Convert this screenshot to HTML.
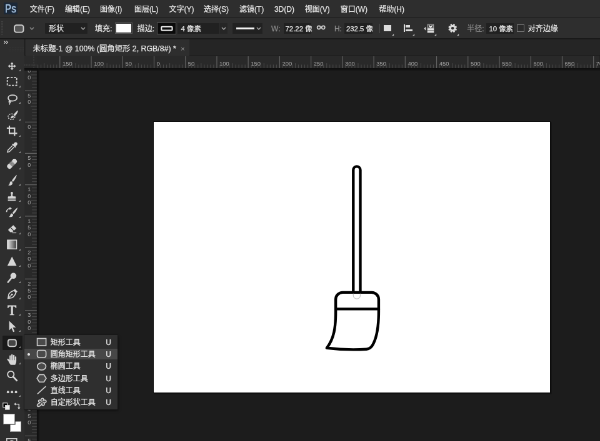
<!DOCTYPE html>
<html lang="zh"><head><meta charset="utf-8"><title>Photoshop</title><style>
html,body{margin:0;padding:0;background:#1c1c1c;}
body{width:600px;height:441px;overflow:hidden;position:relative}
#app{position:absolute;left:0;top:0;width:960px;height:706px;transform:scale(.625);transform-origin:0 0;font-family:"Liberation Sans","Noto Sans CJK SC",sans-serif;font-size:12px;color:#e6e6e6;overflow:hidden;will-change:transform;filter:blur(0.5px)}
.t{position:absolute;white-space:nowrap;line-height:16px;height:16px;margin-top:-8px}
.t{-webkit-text-stroke:0.25px currentColor}
.dim{color:#8c8c8c}
.ps{position:absolute;font-size:19px;line-height:24px;color:#a9c6e4;transform:scaleX(.8);transform-origin:0 0;-webkit-text-stroke:0.5px #a9c6e4}
svg.abs{position:absolute;overflow:visible}
</style></head><body>
<div id="app">
<div style="position:absolute;left:0px;top:0px;width:960px;height:705.6px;background:#1c1c1c"></div>
<div style="position:absolute;left:0px;top:0px;width:960px;height:28.16px;background:#2e2e2e"></div>
<div style="position:absolute;left:5.76px;top:4.16px;width:22.08px;height:19.2px;background:#1b2838"></div>
<div class="ps" style="left:8.32px;top:1.6px">Ps</div>
<div class="t " style="left:47.68px;top:14.88px;">文件(F)</div>
<div class="t " style="left:104px;top:14.88px;">编辑(E)</div>
<div class="t " style="left:160px;top:14.88px;">图像(I)</div>
<div class="t " style="left:214.88px;top:14.88px;">图层(L)</div>
<div class="t " style="left:270.4px;top:14.88px;">文字(Y)</div>
<div class="t " style="left:325.92px;top:14.88px;">选择(S)</div>
<div class="t " style="left:382.88px;top:14.88px;">滤镜(T)</div>
<div class="t " style="left:438.88px;top:14.88px;">3D(D)</div>
<div class="t " style="left:487.68px;top:14.88px;">视图(V)</div>
<div class="t " style="left:544.8px;top:14.88px;">窗口(W)</div>
<div class="t " style="left:606.24px;top:14.88px;">帮助(H)</div>
<div style="position:absolute;left:0px;top:28.16px;width:960px;height:1.28px;background:#1a1a1a"></div>
<div style="position:absolute;left:0px;top:29.44px;width:960px;height:32px;background:#2e2e2e"></div>
<svg class="abs" style="left:22.08px;top:38.88px;" width="16.64" height="13.76" viewBox="0 0 10.4 8.6"><rect x="0.7" y="0.7" width="9" height="7.2" rx="2" fill="#555" stroke="#d2d2d2" stroke-width="1.2"/></svg>
<svg class="abs" style="left:1.6px;top:34.4px;" width="3.2" height="22.4" viewBox="0 0 2 14"><path d="M0.5 0V14M1.6 0V14" stroke="#555" stroke-width="0.5" stroke-dasharray="0.7 0.9"/></svg>
<svg class="abs" style="left:46.72px;top:43.2px;" width="8" height="5.12" viewBox="0 0 5 3.2"><path d="M0.6 0.6L2.5 2.5L4.4 0.6" fill="none" stroke="#8c8c8c" stroke-width="0.9"/></svg>
<div style="position:absolute;left:72px;top:36.64px;width:68px;height:17.6px;background:#212121;border-radius:1px"></div>
<div class="t " style="left:77.92px;top:45.76px;">形状</div>
<svg class="abs" style="left:129.28px;top:43.2px;" width="8" height="5.12" viewBox="0 0 5 3.2"><path d="M0.6 0.6L2.5 2.5L4.4 0.6" fill="none" stroke="#aaa" stroke-width="0.9"/></svg>
<div class="t " style="left:152px;top:45.76px;">填充:</div>
<div style="position:absolute;left:184px;top:36.16px;width:28.16px;height:18.24px;box-sizing:border-box;border:1px solid #5a5a5a"></div>
<div style="position:absolute;left:185.92px;top:38.08px;width:24.32px;height:14.4px;background:#fff"></div>
<div class="t " style="left:219.68px;top:45.76px;">描边:</div>
<div style="position:absolute;left:251.2px;top:35.52px;width:30.72px;height:19.52px;background:#0a0a0a;box-sizing:border-box;border:1px solid #5a5a5a"></div>
<svg class="abs" style="left:256.8px;top:40.96px;" width="20" height="9.6" viewBox="0 0 12.5 6"><rect x="0.8" y="1.1" width="10.8" height="3.6" rx="0.8" fill="none" stroke="#f0f0f0" stroke-width="1.3"/></svg>
<div style="position:absolute;left:284px;top:36.64px;width:67.2px;height:17.6px;background:#212121"></div>
<div class="t " style="left:289.6px;top:45.76px;font-size:11.4px">4 像素</div>
<div style="position:absolute;left:352.48px;top:36.64px;width:12px;height:17.6px;background:#262626"></div>
<svg class="abs" style="left:354.4px;top:43.2px;" width="8" height="5.12" viewBox="0 0 5 3.2"><path d="M0.6 0.6L2.5 2.5L4.4 0.6" fill="none" stroke="#aaa" stroke-width="0.9"/></svg>
<div style="position:absolute;left:371.68px;top:36.64px;width:48.64px;height:17.6px;background:#212121"></div>
<div style="position:absolute;left:377.6px;top:44.48px;width:29.6px;height:2.08px;background:#f2f2f2"></div>
<svg class="abs" style="left:409.76px;top:43.2px;" width="8" height="5.12" viewBox="0 0 5 3.2"><path d="M0.6 0.6L2.5 2.5L4.4 0.6" fill="none" stroke="#aaa" stroke-width="0.9"/></svg>
<div class="t dim" style="left:434.08px;top:45.76px;">W:</div>
<div style="position:absolute;left:453.6px;top:36.64px;width:44.8px;height:17.6px;background:#212121"></div>
<div class="t " style="left:456.48px;top:45.76px;font-size:11.4px">72.22 像</div>
<svg class="abs" style="left:505.6px;top:40.32px;" width="16" height="8" viewBox="0 0 10 5"><circle cx="2.6" cy="2.5" r="1.6" fill="none" stroke="#d2d2d2" stroke-width="1.1"/><circle cx="7" cy="2.5" r="1.6" fill="none" stroke="#d2d2d2" stroke-width="1.1"/></svg>
<div class="t dim" style="left:534.88px;top:45.76px;">H:</div>
<div style="position:absolute;left:551.2px;top:36.64px;width:44.8px;height:17.6px;background:#212121"></div>
<div class="t " style="left:553.92px;top:45.76px;font-size:11.4px">232.5 像</div>
<div style="position:absolute;left:606.72px;top:37.76px;width:1.12px;height:15.36px;background:#4a4a4a"></div>
<div style="position:absolute;left:614.08px;top:40px;width:12px;height:10.4px;background:#dcdcdc"></div>
<svg class="abs" style="left:626.88px;top:54.4px;" width="3.2" height="3.2" viewBox="0 0 2 2"><path d="M2 0V2H0z" fill="#bbb"/></svg>
<div style="position:absolute;left:646.4px;top:38.72px;width:1.76px;height:12.16px;background:#dcdcdc"></div>
<div style="position:absolute;left:648.96px;top:40.48px;width:6.72px;height:3.2px;background:#dcdcdc"></div>
<div style="position:absolute;left:648.96px;top:46.72px;width:11.52px;height:3.2px;background:#dcdcdc"></div>
<svg class="abs" style="left:660.16px;top:54.4px;" width="3.2" height="3.2" viewBox="0 0 2 2"><path d="M2 0V2H0z" fill="#bbb"/></svg>
<svg class="abs" style="left:678.08px;top:37.76px;" width="17.6" height="15.04" viewBox="0 0 11 9.4"><path d="M3.9 0.7h5.9v3.4H3.9z" fill="#3a3a3a" stroke="#9a9a9a" stroke-width="0.8"/><path d="M5 1.6L6.85 3.5L8.7 1.6" fill="none" stroke="#f0f0f0" stroke-width="1.1"/><path d="M3.6 4.5h6.6v4.5H3.6z" fill="#e2e2e2"/><path d="M3.6 6.9h6.6" stroke="#444" stroke-width="0.6"/><path d="M2 3L0.3 4.9L2 6.8z" fill="#dcdcdc"/></svg>
<svg class="abs" style="left:695.2px;top:54.4px;" width="3.2" height="3.2" viewBox="0 0 2 2"><path d="M2 0V2H0z" fill="#bbb"/></svg>
<svg class="abs" style="left:717.44px;top:37.6px;" width="14.4" height="14.4" viewBox="0 0 9 9"><path d="M7.69 4.80 L8.81 5.39 L8.17 6.92 L6.96 6.54 L6.54 6.96 L6.92 8.17 L5.39 8.81 L4.80 7.69 L4.20 7.69 L3.61 8.81 L2.08 8.17 L2.46 6.96 L2.04 6.54 L0.83 6.92 L0.19 5.39 L1.31 4.80 L1.31 4.20 L0.19 3.61 L0.83 2.08 L2.04 2.46 L2.46 2.04 L2.08 0.83 L3.61 0.19 L4.20 1.31 L4.80 1.31 L5.39 0.19 L6.92 0.83 L6.54 2.04 L6.96 2.46 L8.17 2.08 L8.81 3.61 L7.69 4.20 Z M4.5 3.05a1.45 1.45 0 1 0 0.001 0z" fill="#dcdcdc" fill-rule="evenodd"/></svg>
<svg class="abs" style="left:731.2px;top:54.4px;" width="3.2" height="3.2" viewBox="0 0 2 2"><path d="M2 0V2H0z" fill="#bbb"/></svg>
<div class="t dim" style="left:747.2px;top:45.76px;">半径:</div>
<div style="position:absolute;left:778.4px;top:36.64px;width:43.2px;height:17.6px;background:#212121"></div>
<div class="t " style="left:782.4px;top:45.76px;font-size:11.4px">10 像素</div>
<div style="position:absolute;left:827.2px;top:39.36px;width:11.84px;height:11.84px;box-sizing:border-box;border:1px solid #777;background:#2a2a2a"></div>
<div class="t " style="left:844.8px;top:45.76px;">对齐边缘</div>
<div style="position:absolute;left:0px;top:61.12px;width:960px;height:27.2px;background:#252525"></div>
<div style="position:absolute;left:0px;top:61.12px;width:39.36px;height:27.2px;background:#2e2e2e"></div>
<div style="position:absolute;left:40.64px;top:62.4px;width:262.08px;height:26.56px;background:#2e2e2e"></div>
<div style="position:absolute;left:0px;top:61.12px;width:960px;height:1.44px;background:#191919"></div>
<div style="position:absolute;left:39.2px;top:62.4px;width:1.28px;height:644.8px;background:#1b1b1b"></div>
<svg class="abs" style="left:13.6px;top:75.2px;" width="24" height="8" viewBox="0 0 15 5"><path d="M0 1H15M0 2.6H15M0 4.2H15" stroke="#3a3a3a" stroke-width="0.6" stroke-dasharray="0.8 0.8"/></svg>
<div class="t " style="left:52.48px;top:78.4px;font-size:12.35px">未标题-1 @ 100% (圆角矩形 2, RGB/8#) *</div>
<div class="t " style="left:288.96px;top:78.08px;color:#9a9a9a;font-size:11.5px;-webkit-text-stroke:0">×</div>
<div style="position:absolute;left:0px;top:88px;width:39.36px;height:624px;background:#2e2e2e"></div>
<svg class="abs" style="left:5.6px;top:65.28px;" width="8" height="5.44" viewBox="0 0 5 3.4"><path d="M0.4 0.4L1.8 1.7L0.4 3M2.6 0.4L4 1.7L2.6 3" fill="none" stroke="#d6d6d6" stroke-width="0.7"/></svg>
<div style="position:absolute;left:4.16px;top:536.96px;width:31.36px;height:23.04px;background:#1a1a1a;border-radius:1.2px"></div>
<svg class="abs" style="left:7.52px;top:94.72px;" width="22.4" height="22.4" viewBox="0 0 14 14"><path transform="translate(1.1 0.9) scale(.84)" d="M7 2.2L8.9 4.5H7.6V6.4H9.5V5.1L11.8 7L9.5 8.9V7.6H7.6V9.5H8.9L7 11.8L5.1 9.5H6.4V7.6H4.5V8.9L2.2 7L4.5 5.1V6.4H6.4V4.5H5.1z" fill="#d6d6d6"/></svg>
<svg class="abs" style="left:30.24px;top:111.36px;" width="2.88" height="2.88" viewBox="0 0 1.8 1.8"><path d="M1.8 0V1.8H0z" fill="#9a9a9a"/></svg>
<svg class="abs" style="left:7.52px;top:119.01px;" width="22.4" height="22.4" viewBox="0 0 14 14"><rect x="2.3" y="3" width="9.4" height="8" fill="none" stroke="#d6d6d6" stroke-width="1.1" stroke-dasharray="2.1 1.25"/></svg>
<svg class="abs" style="left:30.24px;top:137.41px;" width="2.88" height="2.88" viewBox="0 0 1.8 1.8"><path d="M1.8 0V1.8H0z" fill="#9a9a9a"/></svg>
<svg class="abs" style="left:7.52px;top:146.82px;" width="22.4" height="22.4" viewBox="0 0 14 14"><path d="M7.6 3.2C10.2 3.2 12 4.4 12 6.1C12 7.9 9.9 9.1 7.4 9.1C6.6 9.1 5.9 9 5.3 8.8C4.3 8.4 3.2 7.4 3.2 6.1C3.2 4.4 5 3.2 7.6 3.2z" fill="none" stroke="#d6d6d6" stroke-width="1.1"/><path d="M5 8.6C4 9 3.6 9.9 4.2 10.6C4.8 11.2 5.6 10.9 5.5 10.1C5.4 9.4 4.6 9.3 4.2 9.9 M4.6 10.8C5 11.6 4.9 12.2 4.4 12.8" fill="none" stroke="#d6d6d6" stroke-width="0.9"/></svg>
<svg class="abs" style="left:30.24px;top:163.46px;" width="2.88" height="2.88" viewBox="0 0 1.8 1.8"><path d="M1.8 0V1.8H0z" fill="#9a9a9a"/></svg>
<svg class="abs" style="left:7.52px;top:172.86px;" width="22.4" height="22.4" viewBox="0 0 14 14"><g transform="translate(0.9 0)"><ellipse cx="5.6" cy="8.6" rx="3.4" ry="2.9" fill="none" stroke="#d6d6d6" stroke-width="0.9" stroke-dasharray="1.4 1"/><path d="M12.2 2.2C10.6 3 8.6 5.2 7.6 6.8L8.8 8C10.4 7 12 4.4 12.2 2.2z M7 7.4C5.8 7.6 5.2 8.6 4.6 10.2C6 10.2 7.6 9.8 8.2 8.6z" fill="#d6d6d6"/></g></svg>
<svg class="abs" style="left:30.24px;top:189.5px;" width="2.88" height="2.88" viewBox="0 0 1.8 1.8"><path d="M1.8 0V1.8H0z" fill="#9a9a9a"/></svg>
<svg class="abs" style="left:7.52px;top:197.95px;" width="22.4" height="22.4" viewBox="0 0 14 14"><path d="M4.4 1.8V9.6H12.2 M1.8 4.4H9.6V12.2" fill="none" stroke="#d6d6d6" stroke-width="1.3"/></svg>
<svg class="abs" style="left:30.24px;top:215.55px;" width="2.88" height="2.88" viewBox="0 0 1.8 1.8"><path d="M1.8 0V1.8H0z" fill="#9a9a9a"/></svg>
<svg class="abs" style="left:7.52px;top:224.96px;" width="22.4" height="22.4" viewBox="0 0 14 14"><path d="M11.9 2.1C11.1 1.3 9.9 1.5 9.3 2.3L8.3 3.5L7.7 2.9L6.9 3.7L10.3 7.1L11.1 6.3L10.5 5.7L11.7 4.7C12.5 4.1 12.7 2.9 11.9 2.1z" fill="#d6d6d6"/><path d="M7.6 4.9L3 9.5L2.4 11.6L4.5 11L9.1 6.4" fill="none" stroke="#d6d6d6" stroke-width="0.9"/></svg>
<svg class="abs" style="left:30.24px;top:241.6px;" width="2.88" height="2.88" viewBox="0 0 1.8 1.8"><path d="M1.8 0V1.8H0z" fill="#9a9a9a"/></svg>
<svg class="abs" style="left:7.52px;top:251.01px;" width="22.4" height="22.4" viewBox="0 0 14 14"><g transform="rotate(-45 7 7)"><rect x="1.2" y="4.6" width="11.6" height="4.8" rx="2.2" fill="#d6d6d6"/><rect x="5.2" y="4.6" width="3.6" height="4.8" fill="#2c2c2c" opacity=".55"/><circle cx="6.2" cy="6.2" r=".45" fill="#d6d6d6"/><circle cx="7.8" cy="6.2" r=".45" fill="#d6d6d6"/><circle cx="6.2" cy="7.8" r=".45" fill="#d6d6d6"/><circle cx="7.8" cy="7.8" r=".45" fill="#d6d6d6"/></g></svg>
<svg class="abs" style="left:30.24px;top:267.65px;" width="2.88" height="2.88" viewBox="0 0 1.8 1.8"><path d="M1.8 0V1.8H0z" fill="#9a9a9a"/></svg>
<svg class="abs" style="left:7.52px;top:277.06px;" width="22.4" height="22.4" viewBox="0 0 14 14"><path transform="translate(1.2 0) scale(.86 1)" d="M12.3 1.7C10.6 2.7 7.6 6 6.6 7.6L7.8 8.8C9.4 7.6 12 4 12.3 1.7z M6 8.2C4.6 8.3 4.2 9.3 4 10.3C3.8 11.1 3.2 11.7 2.4 12C3.8 12.6 6 12.4 6.9 11.2C7.5 10.4 7.4 9.6 7.1 9.2z" fill="#d6d6d6"/></svg>
<svg class="abs" style="left:30.24px;top:293.7px;" width="2.88" height="2.88" viewBox="0 0 1.8 1.8"><path d="M1.8 0V1.8H0z" fill="#9a9a9a"/></svg>
<svg class="abs" style="left:7.52px;top:303.1px;" width="22.4" height="22.4" viewBox="0 0 14 14"><path transform="translate(1.1 1.4) scale(.82)" d="M5.6 2.6C5.6 1.8 6.2 1.3 7 1.3C7.8 1.3 8.4 1.8 8.4 2.6C8.4 3.6 7.8 4.4 7.8 5.4C7.8 6.2 8.2 6.6 9 6.8H10.8C11.4 6.8 11.8 7.2 11.8 7.8V9.6H2.2V7.8C2.2 7.2 2.6 6.8 3.2 6.8H5C5.8 6.6 6.2 6.2 6.2 5.4C6.2 4.4 5.6 3.6 5.6 2.6z M2.2 10.6H11.8V12.2H2.2z" fill="#d6d6d6"/></svg>
<svg class="abs" style="left:30.24px;top:319.74px;" width="2.88" height="2.88" viewBox="0 0 1.8 1.8"><path d="M1.8 0V1.8H0z" fill="#9a9a9a"/></svg>
<svg class="abs" style="left:7.52px;top:329.15px;" width="22.4" height="22.4" viewBox="0 0 14 14"><path d="M12.6 1.9C11 2.9 8.4 5.8 7.5 7.3L8.6 8.4C10.1 7.3 12.3 4 12.6 1.9z M7 7.8C5.8 7.9 5.4 8.8 5.2 9.7C5 10.4 4.6 10.9 3.9 11.2C5.1 11.7 7 11.5 7.8 10.5C8.3 9.8 8.2 9.1 7.9 8.7z" fill="#d6d6d6"/><path d="M1.6 6.4C1.6 4.2 3.2 2.8 5.2 2.8" fill="none" stroke="#d6d6d6" stroke-width="1"/><path d="M4.6 1.2L6.8 2.8L4.6 4.4z" fill="#d6d6d6"/></svg>
<svg class="abs" style="left:30.24px;top:345.79px;" width="2.88" height="2.88" viewBox="0 0 1.8 1.8"><path d="M1.8 0V1.8H0z" fill="#9a9a9a"/></svg>
<svg class="abs" style="left:7.52px;top:355.2px;" width="22.4" height="22.4" viewBox="0 0 14 14"><g transform="translate(1.6 1.7) scale(.8)"><path d="M8.4 2L12.2 5.8L7.2 10.8H4.6L2.4 8.6C2 8.2 2 7.6 2.4 7.2z" fill="#d6d6d6"/><path d="M5.2 5.2L9 9" stroke="#2c2c2c" stroke-width="0.9"/><path d="M7 11.6H12.2" fill="none" stroke="#d6d6d6" stroke-width="0.9"/></g></svg>
<svg class="abs" style="left:30.24px;top:371.84px;" width="2.88" height="2.88" viewBox="0 0 1.8 1.8"><path d="M1.8 0V1.8H0z" fill="#9a9a9a"/></svg>
<svg class="abs" style="left:7.52px;top:380.45px;" width="22.4" height="22.4" viewBox="0 0 14 14"><defs><linearGradient id="gr" x1="0" x2="1"><stop offset="0" stop-color="#e8e8e8"/><stop offset="1" stop-color="#3a3a3a"/></linearGradient></defs><rect x="2.4" y="2.6" width="9.2" height="8.8" fill="url(#gr)" stroke="#d6d6d6" stroke-width="0.9"/></svg>
<svg class="abs" style="left:30.24px;top:397.89px;" width="2.88" height="2.88" viewBox="0 0 1.8 1.8"><path d="M1.8 0V1.8H0z" fill="#9a9a9a"/></svg>
<svg class="abs" style="left:7.52px;top:407.3px;" width="22.4" height="22.4" viewBox="0 0 14 14"><path d="M7 2.2L11.6 11.4H2.4z" fill="#d6d6d6"/></svg>
<svg class="abs" style="left:30.24px;top:423.94px;" width="2.88" height="2.88" viewBox="0 0 1.8 1.8"><path d="M1.8 0V1.8H0z" fill="#9a9a9a"/></svg>
<svg class="abs" style="left:7.52px;top:433.34px;" width="22.4" height="22.4" viewBox="0 0 14 14"><circle cx="8.4" cy="5.2" r="3" fill="#d6d6d6"/><path d="M6.4 7.4L3 11.6" fill="none" stroke="#d6d6d6" stroke-width="1.6" stroke-linecap="round"/></svg>
<svg class="abs" style="left:30.24px;top:449.98px;" width="2.88" height="2.88" viewBox="0 0 1.8 1.8"><path d="M1.8 0V1.8H0z" fill="#9a9a9a"/></svg>
<svg class="abs" style="left:7.52px;top:459.39px;" width="22.4" height="22.4" viewBox="0 0 14 14"><path d="M3 11.6L3.8 7.2C5.2 5.4 7 4.2 9 3.6L11 5.6C10.4 7.6 9.2 9.4 7.4 10.8z" fill="none" stroke="#d6d6d6" stroke-width="1"/><path d="M3.2 11.4L6.6 8" fill="none" stroke="#d6d6d6" stroke-width="0.8"/><circle cx="7" cy="7.6" r="0.9" fill="#d6d6d6"/><path d="M9.4 2.6L12 5.2" fill="none" stroke="#d6d6d6" stroke-width="1.4"/></svg>
<svg class="abs" style="left:30.24px;top:476.03px;" width="2.88" height="2.88" viewBox="0 0 1.8 1.8"><path d="M1.8 0V1.8H0z" fill="#9a9a9a"/></svg>
<svg class="abs" style="left:7.52px;top:485.44px;" width="22.4" height="22.4" viewBox="0 0 14 14"><path d="M2.6 2.2H11.4V5H10.6C10.5 4 10.1 3.4 9.2 3.4H8V10.4C8 11 8.3 11.2 9.2 11.2V12H4.8V11.2C5.7 11.2 6 11 6 10.4V3.4H4.8C3.9 3.4 3.5 4 3.4 5H2.6z" fill="#d6d6d6"/></svg>
<svg class="abs" style="left:30.24px;top:502.08px;" width="2.88" height="2.88" viewBox="0 0 1.8 1.8"><path d="M1.8 0V1.8H0z" fill="#9a9a9a"/></svg>
<svg class="abs" style="left:7.52px;top:511.49px;" width="22.4" height="22.4" viewBox="0 0 14 14"><path d="M4.2 1.6L11 8.2H7.8L9.6 12L8.2 12.6L6.5 8.8L4.2 11z" fill="#d6d6d6"/></svg>
<svg class="abs" style="left:30.24px;top:528.13px;" width="2.88" height="2.88" viewBox="0 0 1.8 1.8"><path d="M1.8 0V1.8H0z" fill="#9a9a9a"/></svg>
<svg class="abs" style="left:7.52px;top:537.54px;" width="22.4" height="22.4" viewBox="0 0 14 14"><rect x="3" y="3.4" width="8.2" height="6.8" rx="2" fill="#454545" stroke="#d6d6d6" stroke-width="1.1"/></svg>
<svg class="abs" style="left:30.24px;top:554.18px;" width="2.88" height="2.88" viewBox="0 0 1.8 1.8"><path d="M1.8 0V1.8H0z" fill="#9a9a9a"/></svg>
<svg class="abs" style="left:7.52px;top:563.58px;" width="22.4" height="22.4" viewBox="0 0 14 14"><g stroke="#d6d6d6" stroke-width="1.45" stroke-linecap="round" fill="none"><path d="M5.2 3.6V8M7 2.5V8M8.8 3V8M10.6 4.6V8.6M2.9 6.9L4.9 9.4"/></g><path d="M4.5 7.6H11.3V9C11.3 10.4 10.6 11.2 10.2 12.4H5.6C5.2 11.4 4 10.4 3.6 9z" fill="#d6d6d6"/></svg>
<svg class="abs" style="left:30.24px;top:580.22px;" width="2.88" height="2.88" viewBox="0 0 1.8 1.8"><path d="M1.8 0V1.8H0z" fill="#9a9a9a"/></svg>
<svg class="abs" style="left:7.52px;top:589.63px;" width="22.4" height="22.4" viewBox="0 0 14 14"><circle cx="5.8" cy="5.6" r="3.2" fill="none" stroke="#d6d6d6" stroke-width="1.2"/><path d="M8.2 8L11.8 11.8" fill="none" stroke="#d6d6d6" stroke-width="1.7" stroke-linecap="round"/></svg>
<svg class="abs" style="left:7.52px;top:615.68px;" width="22.4" height="22.4" viewBox="0 0 14 14"><circle cx="3" cy="7" r="1.25" fill="#d6d6d6"/><circle cx="7" cy="7" r="1.25" fill="#d6d6d6"/><circle cx="11" cy="7" r="1.25" fill="#d6d6d6"/></svg>
<svg class="abs" style="left:30.24px;top:632.32px;" width="2.88" height="2.88" viewBox="0 0 1.8 1.8"><path d="M1.8 0V1.8H0z" fill="#9a9a9a"/></svg>
<svg class="abs" style="left:4.16px;top:644px;" width="12.8" height="12.8" viewBox="0 0 8 8"><rect x="0.5" y="0.5" width="4.2" height="4.2" fill="#000" stroke="#ddd" stroke-width="0.7"/><rect x="2.8" y="2.8" width="4.2" height="4.2" fill="#eee" stroke="#ddd" stroke-width="0.5"/></svg>
<svg class="abs" style="left:21.12px;top:643.68px;" width="12.8" height="12.8" viewBox="0 0 8 8"><path d="M2.2 1.6H5.8V5.2" fill="none" stroke="#ddd" stroke-width="0.8"/><path d="M0.8 1.6L2.6 0.2V3z M5.8 6.8L4.4 5H7.2z" fill="#ddd"/></svg>
<div style="position:absolute;left:16.32px;top:673.6px;width:17.28px;height:16.96px;background:#fff;box-sizing:border-box;border:0.6px solid #9a9a9a"></div>
<div style="position:absolute;left:5.12px;top:661.76px;width:18.56px;height:17.6px;background:#fff;box-sizing:border-box;border:0.6px solid #8a8a8a;box-shadow:0 0 0 0.6px #2c2c2c"></div>
<svg class="abs" style="left:10.4px;top:700.8px;" width="17.6" height="9.6" viewBox="0 0 11 6"><rect x="0.5" y="0.5" width="10" height="7" fill="none" stroke="#ccc" stroke-width="1"/><circle cx="5.5" cy="4.5" r="2" fill="none" stroke="#ccc" stroke-width="0.8"/></svg>
<svg class="abs" style="left:39.36px;top:88.96px;font-family:'Liberation Sans',sans-serif;overflow:hidden" width="920.64" height="20.48" viewBox="24.6 0 575.4 12.8"><rect x="0" y="0" width="600" height="12.8" fill="#292929"/><text x="62.57" y="10.2" font-size="5.9" fill="#a4a4a4">150</text><text x="93.98" y="10.2" font-size="5.9" fill="#a4a4a4">100</text><text x="125.39" y="10.2" font-size="5.9" fill="#a4a4a4">50</text><text x="156.80" y="10.2" font-size="5.9" fill="#a4a4a4">0</text><text x="188.21" y="10.2" font-size="5.9" fill="#a4a4a4">50</text><text x="219.62" y="10.2" font-size="5.9" fill="#a4a4a4">100</text><text x="251.03" y="10.2" font-size="5.9" fill="#a4a4a4">150</text><text x="282.44" y="10.2" font-size="5.9" fill="#a4a4a4">200</text><text x="313.85" y="10.2" font-size="5.9" fill="#a4a4a4">250</text><text x="345.26" y="10.2" font-size="5.9" fill="#a4a4a4">300</text><text x="376.67" y="10.2" font-size="5.9" fill="#a4a4a4">350</text><text x="408.08" y="10.2" font-size="5.9" fill="#a4a4a4">400</text><text x="439.49" y="10.2" font-size="5.9" fill="#a4a4a4">450</text><text x="470.90" y="10.2" font-size="5.9" fill="#a4a4a4">500</text><text x="502.31" y="10.2" font-size="5.9" fill="#a4a4a4">550</text><text x="533.72" y="10.2" font-size="5.9" fill="#a4a4a4">600</text><text x="565.13" y="10.2" font-size="5.9" fill="#a4a4a4">650</text><text x="596.54" y="10.2" font-size="5.9" fill="#a4a4a4">700</text><path d="M37.98 9V12.8M41.12 9V12.8M44.26 7.6V12.8M47.41 9V12.8M50.55 9V12.8M53.69 9V12.8M56.83 9V12.8M63.11 9V12.8M66.25 9V12.8M69.39 9V12.8M72.53 9V12.8M75.67 7.6V12.8M78.82 9V12.8M81.96 9V12.8M85.10 9V12.8M88.24 9V12.8M94.52 9V12.8M97.66 9V12.8M100.80 9V12.8M103.94 9V12.8M107.08 7.6V12.8M110.23 9V12.8M113.37 9V12.8M116.51 9V12.8M119.65 9V12.8M125.93 9V12.8M129.07 9V12.8M132.21 9V12.8M135.35 9V12.8M138.50 7.6V12.8M141.64 9V12.8M144.78 9V12.8M147.92 9V12.8M151.06 9V12.8M157.34 9V12.8M160.48 9V12.8M163.62 9V12.8M166.76 9V12.8M169.91 7.6V12.8M173.05 9V12.8M176.19 9V12.8M179.33 9V12.8M182.47 9V12.8M188.75 9V12.8M191.89 9V12.8M195.03 9V12.8M198.17 9V12.8M201.31 7.6V12.8M204.46 9V12.8M207.60 9V12.8M210.74 9V12.8M213.88 9V12.8M220.16 9V12.8M223.30 9V12.8M226.44 9V12.8M229.58 9V12.8M232.72 7.6V12.8M235.87 9V12.8M239.01 9V12.8M242.15 9V12.8M245.29 9V12.8M251.57 9V12.8M254.71 9V12.8M257.85 9V12.8M260.99 9V12.8M264.13 7.6V12.8M267.28 9V12.8M270.42 9V12.8M273.56 9V12.8M276.70 9V12.8M282.98 9V12.8M286.12 9V12.8M289.26 9V12.8M292.40 9V12.8M295.54 7.6V12.8M298.69 9V12.8M301.83 9V12.8M304.97 9V12.8M308.11 9V12.8M314.39 9V12.8M317.53 9V12.8M320.67 9V12.8M323.81 9V12.8M326.95 7.6V12.8M330.10 9V12.8M333.24 9V12.8M336.38 9V12.8M339.52 9V12.8M345.80 9V12.8M348.94 9V12.8M352.08 9V12.8M355.22 9V12.8M358.36 7.6V12.8M361.51 9V12.8M364.65 9V12.8M367.79 9V12.8M370.93 9V12.8M377.21 9V12.8M380.35 9V12.8M383.49 9V12.8M386.63 9V12.8M389.77 7.6V12.8M392.92 9V12.8M396.06 9V12.8M399.20 9V12.8M402.34 9V12.8M408.62 9V12.8M411.76 9V12.8M414.90 9V12.8M418.04 9V12.8M421.19 7.6V12.8M424.33 9V12.8M427.47 9V12.8M430.61 9V12.8M433.75 9V12.8M440.03 9V12.8M443.17 9V12.8M446.31 9V12.8M449.45 9V12.8M452.59 7.6V12.8M455.74 9V12.8M458.88 9V12.8M462.02 9V12.8M465.16 9V12.8M471.44 9V12.8M474.58 9V12.8M477.72 9V12.8M480.86 9V12.8M484.00 7.6V12.8M487.15 9V12.8M490.29 9V12.8M493.43 9V12.8M496.57 9V12.8M502.85 9V12.8M505.99 9V12.8M509.13 9V12.8M512.27 9V12.8M515.41 7.6V12.8M518.56 9V12.8M521.70 9V12.8M524.84 9V12.8M527.98 9V12.8M534.26 9V12.8M537.40 9V12.8M540.54 9V12.8M543.68 9V12.8M546.83 7.6V12.8M549.97 9V12.8M553.11 9V12.8M556.25 9V12.8M559.39 9V12.8M565.67 9V12.8M568.81 9V12.8M571.95 9V12.8M575.09 9V12.8M578.24 7.6V12.8M581.38 9V12.8M584.52 9V12.8M587.66 9V12.8M590.80 9V12.8M597.08 9V12.8" stroke="#4c4c4c" stroke-width="0.6" fill="none"/><path d="M59.97 0.6V12.8M91.38 0.6V12.8M122.79 0.6V12.8M154.20 0.6V12.8M185.61 0.6V12.8M217.02 0.6V12.8M248.43 0.6V12.8M279.84 0.6V12.8M311.25 0.6V12.8M342.66 0.6V12.8M374.07 0.6V12.8M405.48 0.6V12.8M436.89 0.6V12.8M468.30 0.6V12.8M499.71 0.6V12.8M531.12 0.6V12.8M562.53 0.6V12.8M593.94 0.6V12.8" stroke="#646464" stroke-width="0.7" fill="none"/></svg>
<svg class="abs" style="left:39.36px;top:109.44px;font-family:'Liberation Sans',sans-serif;overflow:hidden" width="19.84" height="599.36" viewBox="0 0 12.4 374.6"><rect x="0" y="0" width="12.4" height="400" fill="#292929"/><text x="4.8" y="-2.32" font-size="5.7" fill="#a4a4a4" text-anchor="middle">1</text><text x="4.8" y="4.28" font-size="5.7" fill="#a4a4a4" text-anchor="middle">0</text><text x="4.8" y="10.88" font-size="5.7" fill="#a4a4a4" text-anchor="middle">0</text><text x="4.8" y="29.09" font-size="5.7" fill="#a4a4a4" text-anchor="middle">5</text><text x="4.8" y="35.69" font-size="5.7" fill="#a4a4a4" text-anchor="middle">0</text><text x="4.8" y="60.50" font-size="5.7" fill="#a4a4a4" text-anchor="middle">0</text><text x="4.8" y="91.91" font-size="5.7" fill="#a4a4a4" text-anchor="middle">5</text><text x="4.8" y="98.51" font-size="5.7" fill="#a4a4a4" text-anchor="middle">0</text><text x="4.8" y="123.32" font-size="5.7" fill="#a4a4a4" text-anchor="middle">1</text><text x="4.8" y="129.92" font-size="5.7" fill="#a4a4a4" text-anchor="middle">0</text><text x="4.8" y="136.52" font-size="5.7" fill="#a4a4a4" text-anchor="middle">0</text><text x="4.8" y="154.73" font-size="5.7" fill="#a4a4a4" text-anchor="middle">1</text><text x="4.8" y="161.33" font-size="5.7" fill="#a4a4a4" text-anchor="middle">5</text><text x="4.8" y="167.93" font-size="5.7" fill="#a4a4a4" text-anchor="middle">0</text><text x="4.8" y="186.14" font-size="5.7" fill="#a4a4a4" text-anchor="middle">2</text><text x="4.8" y="192.74" font-size="5.7" fill="#a4a4a4" text-anchor="middle">0</text><text x="4.8" y="199.34" font-size="5.7" fill="#a4a4a4" text-anchor="middle">0</text><text x="4.8" y="217.55" font-size="5.7" fill="#a4a4a4" text-anchor="middle">2</text><text x="4.8" y="224.15" font-size="5.7" fill="#a4a4a4" text-anchor="middle">5</text><text x="4.8" y="230.75" font-size="5.7" fill="#a4a4a4" text-anchor="middle">0</text><text x="4.8" y="248.96" font-size="5.7" fill="#a4a4a4" text-anchor="middle">3</text><text x="4.8" y="255.56" font-size="5.7" fill="#a4a4a4" text-anchor="middle">0</text><text x="4.8" y="262.16" font-size="5.7" fill="#a4a4a4" text-anchor="middle">0</text><text x="4.8" y="280.37" font-size="5.7" fill="#a4a4a4" text-anchor="middle">3</text><text x="4.8" y="286.97" font-size="5.7" fill="#a4a4a4" text-anchor="middle">5</text><text x="4.8" y="293.57" font-size="5.7" fill="#a4a4a4" text-anchor="middle">0</text><text x="4.8" y="311.78" font-size="5.7" fill="#a4a4a4" text-anchor="middle">4</text><text x="4.8" y="318.38" font-size="5.7" fill="#a4a4a4" text-anchor="middle">0</text><text x="4.8" y="324.98" font-size="5.7" fill="#a4a4a4" text-anchor="middle">0</text><text x="4.8" y="343.19" font-size="5.7" fill="#a4a4a4" text-anchor="middle">4</text><text x="4.8" y="349.79" font-size="5.7" fill="#a4a4a4" text-anchor="middle">5</text><text x="4.8" y="356.39" font-size="5.7" fill="#a4a4a4" text-anchor="middle">0</text><text x="4.8" y="374.60" font-size="5.7" fill="#a4a4a4" text-anchor="middle">5</text><text x="4.8" y="381.20" font-size="5.7" fill="#a4a4a4" text-anchor="middle">0</text><text x="4.8" y="387.80" font-size="5.7" fill="#a4a4a4" text-anchor="middle">0</text><path d="M7.6 -5.88H12.4M7.6 -2.74H12.4M7.6 0.40H12.4M7.6 3.54H12.4M6.2 6.68H12.4M7.6 9.83H12.4M7.6 12.97H12.4M7.6 16.11H12.4M7.6 19.25H12.4M7.6 25.53H12.4M7.6 28.67H12.4M7.6 31.81H12.4M7.6 34.95H12.4M6.2 38.09H12.4M7.6 41.24H12.4M7.6 44.38H12.4M7.6 47.52H12.4M7.6 50.66H12.4M7.6 56.94H12.4M7.6 60.08H12.4M7.6 63.22H12.4M7.6 66.36H12.4M6.2 69.50H12.4M7.6 72.65H12.4M7.6 75.79H12.4M7.6 78.93H12.4M7.6 82.07H12.4M7.6 88.35H12.4M7.6 91.49H12.4M7.6 94.63H12.4M7.6 97.77H12.4M6.2 100.92H12.4M7.6 104.06H12.4M7.6 107.20H12.4M7.6 110.34H12.4M7.6 113.48H12.4M7.6 119.76H12.4M7.6 122.90H12.4M7.6 126.04H12.4M7.6 129.18H12.4M6.2 132.33H12.4M7.6 135.47H12.4M7.6 138.61H12.4M7.6 141.75H12.4M7.6 144.89H12.4M7.6 151.17H12.4M7.6 154.31H12.4M7.6 157.45H12.4M7.6 160.59H12.4M6.2 163.74H12.4M7.6 166.88H12.4M7.6 170.02H12.4M7.6 173.16H12.4M7.6 176.30H12.4M7.6 182.58H12.4M7.6 185.72H12.4M7.6 188.86H12.4M7.6 192.00H12.4M6.2 195.15H12.4M7.6 198.29H12.4M7.6 201.43H12.4M7.6 204.57H12.4M7.6 207.71H12.4M7.6 213.99H12.4M7.6 217.13H12.4M7.6 220.27H12.4M7.6 223.41H12.4M6.2 226.56H12.4M7.6 229.70H12.4M7.6 232.84H12.4M7.6 235.98H12.4M7.6 239.12H12.4M7.6 245.40H12.4M7.6 248.54H12.4M7.6 251.68H12.4M7.6 254.82H12.4M6.2 257.97H12.4M7.6 261.11H12.4M7.6 264.25H12.4M7.6 267.39H12.4M7.6 270.53H12.4M7.6 276.81H12.4M7.6 279.95H12.4M7.6 283.09H12.4M7.6 286.23H12.4M6.2 289.37H12.4M7.6 292.52H12.4M7.6 295.66H12.4M7.6 298.80H12.4M7.6 301.94H12.4M7.6 308.22H12.4M7.6 311.36H12.4M7.6 314.50H12.4M7.6 317.64H12.4M6.2 320.79H12.4M7.6 323.93H12.4M7.6 327.07H12.4M7.6 330.21H12.4M7.6 333.35H12.4M7.6 339.63H12.4M7.6 342.77H12.4M7.6 345.91H12.4M7.6 349.05H12.4M6.2 352.19H12.4M7.6 355.34H12.4M7.6 358.48H12.4M7.6 361.62H12.4M7.6 364.76H12.4M7.6 371.04H12.4M7.6 374.18H12.4M7.6 377.32H12.4M7.6 380.46H12.4M6.2 383.60H12.4M7.6 386.75H12.4M7.6 389.89H12.4M7.6 393.03H12.4M7.6 396.17H12.4" stroke="#4c4c4c" stroke-width="0.6" fill="none"/><path d="M0.6 -9.02H12.4M0.6 22.39H12.4M0.6 53.80H12.4M0.6 85.21H12.4M0.6 116.62H12.4M0.6 148.03H12.4M0.6 179.44H12.4M0.6 210.85H12.4M0.6 242.26H12.4M0.6 273.67H12.4M0.6 305.08H12.4M0.6 336.49H12.4M0.6 367.90H12.4" stroke="#646464" stroke-width="0.7" fill="none"/></svg>
<div style="position:absolute;left:39.36px;top:88.96px;width:19.84px;height:20.48px;background:#2a2a2a"></div>
<svg class="abs" style="left:39.36px;top:88.96px;" width="19.84" height="20.48" viewBox="0 0 12.4 12.8"><path d="M0 9.4H12.4 M9.4 0V12.8" stroke="#555" stroke-width="0.6" stroke-dasharray="0.8 0.8"/></svg>
<div style="position:absolute;left:39.36px;top:109.44px;width:960px;height:3.52px;background:linear-gradient(#0e0e0e,#161616)"></div>
<div style="position:absolute;left:59.2px;top:109.44px;width:3.52px;height:640px;background:linear-gradient(90deg,#0e0e0e,#161616)"></div>
<div style="position:absolute;left:246.08px;top:194.88px;width:633.92px;height:432.96px;background:#fff;box-shadow:0 0 0 1px #0c0c0c, 1.5px 1.5px 0 1px #101010"></div>
<svg class="abs" style="left:0px;top:0px;pointer-events:none" width="960" height="705.6" viewBox="0 0 600 441">
<g fill="none" stroke="#000" stroke-width="2.75" stroke-linejoin="round" stroke-linecap="round">
<path d="M353.3 292.4V170A3.5 3.5 0 0 1 360.3 170V292.4"/>
<path d="M335.7 309V299.4A7 7 0 0 1 342.7 292.4H371.7A7 7 0 0 1 378.7 299.4V309"/>
<path d="M335.7 309H378.7"/>
<path d="M335.7 309C335.9 328 334 338.5 326.8 348C340 349.6 354 350 366.4 349.2C369.4 349 370.6 348 372 346C376.6 339 378.9 328 378.7 309"/>
</g>
<path d="M353.3 293.6V295.4A3.5 3.5 0 0 0 360.3 295.4V293.6" fill="none" stroke="#c8c8c8" stroke-width="0.8"/>
</svg>
<div style="position:absolute;left:39.04px;top:536.32px;width:148.8px;height:118.4px;background:#2f2f2f;box-shadow:0 0 0 0.7px #161616, 1px 2px 4px rgba(0,0,0,.5)"></div>
<svg class="abs" style="left:56.64px;top:537.92px;" width="19.2" height="19.2" viewBox="0 0 12 12"><rect x="1.6" y="2.2" width="8.8" height="7.2" fill="#4a4a4a" stroke="#d2d2d2" stroke-width="1"/></svg>
<div class="t " style="left:80.64px;top:547.52px;">矩形工具</div>
<div class="t " style="left:169.28px;top:547.52px;">U</div>
<div style="position:absolute;left:39.04px;top:558.21px;width:148.8px;height:17.28px;background:#474747"></div>
<div style="position:absolute;left:44.16px;top:565.09px;width:3.52px;height:3.52px;background:#e6e6e6;border-radius:50%"></div>
<svg class="abs" style="left:56.64px;top:557.25px;" width="19.2" height="19.2" viewBox="0 0 12 12"><rect x="1.6" y="2.2" width="8.8" height="7.2" rx="2" fill="#4a4a4a" stroke="#d2d2d2" stroke-width="1"/></svg>
<div class="t " style="left:80.64px;top:566.85px;">圆角矩形工具</div>
<div class="t " style="left:169.28px;top:566.85px;">U</div>
<svg class="abs" style="left:56.64px;top:576.58px;" width="19.2" height="19.2" viewBox="0 0 12 12"><ellipse cx="6" cy="5.8" rx="4.3" ry="3.6" fill="#4a4a4a" stroke="#d2d2d2" stroke-width="1"/></svg>
<div class="t " style="left:80.64px;top:586.18px;">椭圆工具</div>
<div class="t " style="left:169.28px;top:586.18px;">U</div>
<svg class="abs" style="left:56.64px;top:595.9px;" width="19.2" height="19.2" viewBox="0 0 12 12"><path d="M3.7 2.1H8.3L10.6 5.8L8.3 9.5H3.7L1.4 5.8z" fill="#4a4a4a" stroke="#d2d2d2" stroke-width="1"/></svg>
<div class="t " style="left:80.64px;top:605.5px;">多边形工具</div>
<div class="t " style="left:169.28px;top:605.5px;">U</div>
<svg class="abs" style="left:56.64px;top:615.23px;" width="19.2" height="19.2" viewBox="0 0 12 12"><path d="M1.8 9.6L10.2 2" stroke="#d2d2d2" stroke-width="1" fill="none"/></svg>
<div class="t " style="left:80.64px;top:624.83px;">直线工具</div>
<div class="t " style="left:169.28px;top:624.83px;">U</div>
<svg class="abs" style="left:56.64px;top:634.56px;" width="19.2" height="19.2" viewBox="0 0 12 12"><path d="M6.6 1.4C7.8 1.2 8.4 2.4 7.8 3.4C9 2.8 10.6 3.2 10.6 4.6C10.6 5.8 9.2 6.2 8.4 5.8C9.2 7 8.8 8.6 7.6 8.6C6.6 8.6 6.2 7.8 6.2 7C5.4 8.4 4 9.8 2.6 9.6C1.4 9.4 1.2 8 2.2 7.2C3 6.6 3.8 6.4 4.4 5.6C3.2 5.4 2.4 4.4 3 3.6C3.6 2.8 4.8 3.2 5.4 3.8C5.2 2.8 5.6 1.6 6.6 1.4z" fill="#4a4a4a" stroke="#d2d2d2" stroke-width="1"/></svg>
<div class="t " style="left:80.64px;top:644.16px;">自定形状工具</div>
<div class="t " style="left:169.28px;top:644.16px;">U</div>
</div></body></html>
